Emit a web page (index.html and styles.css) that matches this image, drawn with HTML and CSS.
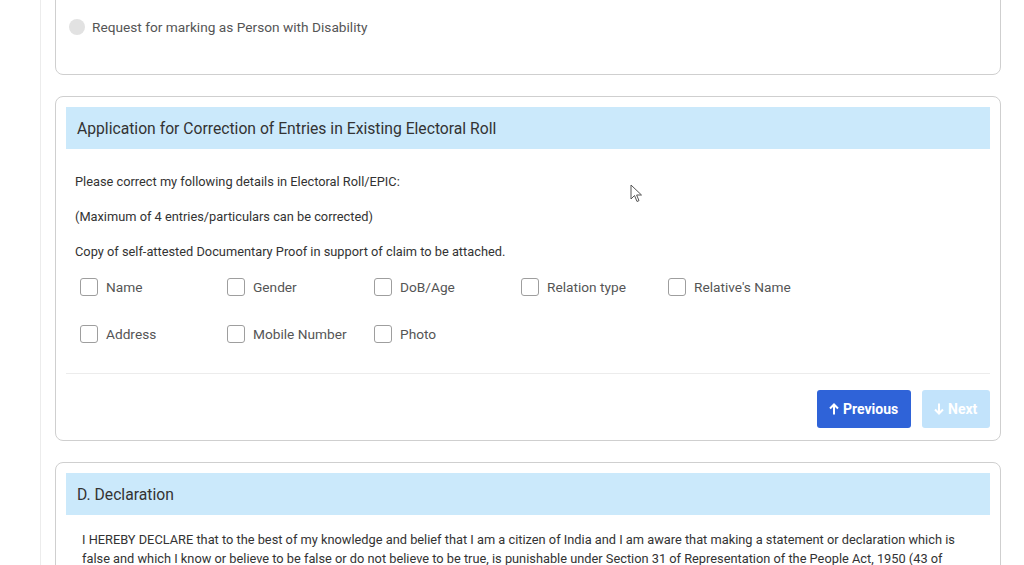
FILE: index.html
```html
<!DOCTYPE html>
<html lang="en">
<head>
    <meta charset="UTF-8">
    <meta name="viewport" content="width=device-width, initial-scale=1.0">
    <title>Form 8 - Correction of Entries</title>
    <link rel="stylesheet" href="styles.css">
</head>
<body>
    <div class="page">
        <div class="card card-top">
            <label class="radio-row">
                <span class="radio"></span>
                Request for marking as Person with Disability
            </label>
        </div>

        <div class="card">
            <div class="card-header">Application for Correction of Entries in Existing Electoral Roll</div>
            <div class="card-body">
                <p>Please correct my following details in Electoral Roll/EPIC:</p>
                <p>(Maximum of 4 entries/particulars can be corrected)</p>
                <p>Copy of self-attested Documentary Proof in support of claim to be attached.</p>

                <div class="check-grid">
                    <label class="check"><span class="box"></span>Name</label>
                    <label class="check"><span class="box"></span>Gender</label>
                    <label class="check"><span class="box"></span>DoB/Age</label>
                    <label class="check"><span class="box"></span>Relation type</label>
                    <label class="check"><span class="box"></span>Relative's Name</label>
                    <label class="check"><span class="box"></span>Address</label>
                    <label class="check"><span class="box"></span>Mobile Number</label>
                    <label class="check"><span class="box"></span>Photo</label>
                </div>
            </div>
            <div class="card-footer">
                <button class="btn btn-primary">
                    <svg class="arrow" width="10" height="12" viewBox="0 0 10 12"><path d="M5 11.5V1.5M1 5.5L5 1.5L9 5.5" fill="none" stroke="currentColor" stroke-width="2"/></svg>
                    Previous
                </button>
                <button class="btn btn-disabled">
                    <svg class="arrow" width="10" height="12" viewBox="0 0 10 12"><path d="M5 0.5V10.5M1 6.5L5 10.5L9 6.5" fill="none" stroke="currentColor" stroke-width="2"/></svg>
                    Next
                </button>
            </div>
        </div>

        <div class="card">
            <div class="card-header">D. Declaration</div>
            <div class="declaration">
                I HEREBY DECLARE that to the best of my knowledge and belief that I am a citizen of India and I am aware that making a statement or declaration which is false and which I know or believe to be false or do not believe to be true, is punishable under Section 31 of Representation of the People Act, 1950 (43 of 1950) with imprisonment for a term which may extend to one year or with fine or with both.
            </div>
        </div>
    </div>

    <svg class="cursor" width="14" height="20" viewBox="0 0 14 20">
        <path d="M1 1 L1 15 L4.5 11.5 L7 17.5 L9 16.6 L6.6 11 L11.5 11 Z" fill="#fff" stroke="#555" stroke-width="1" stroke-linejoin="round"/>
    </svg>
</body>
</html>
```

FILE: styles.css
```css
body {
    font-family: Roboto, "Liberation Sans", Arial, sans-serif;
    margin: 0;
    padding: 0;
    background-color: #fff;
    color: #444;
    overflow: hidden;
}
.page {
    margin-left: 40px;
    margin-right: 23px;
    padding-left: 14px;
    border-left: 1px solid #ececec;
    min-height: 600px;
    margin-top: -40px;
}
.card {
    border: 1px solid #cfcfcf;
    border-radius: 8px;
    padding: 10px;
    margin-bottom: 21px;
    background-color: #fff;
}
.card-top {
    padding: 58px 13px 39px;
}
.radio-row {
    display: flex;
    align-items: center;
    font-size: 13.7px;
    color: #555;
}
.radio {
    width: 16px;
    height: 16px;
    border-radius: 50%;
    background-color: #e2e2e2;
    margin-right: 7px;
}
.card-header {
    background-color: #cbe9fb;
    color: #333;
    font-size: 15.7px;
    height: 42px;
    display: flex;
    align-items: center;
    padding-left: 11px;
}
.card-body {
    padding: 24px 10px 0 9px;
    border-bottom: 1px solid #ececec;
}
.card-body p {
    font-size: 12.8px;
    line-height: 18px;
    margin: 0 0 17px;
    color: #333;
}
.check-grid {
    display: grid;
    grid-template-columns: repeat(5, 147px);
    row-gap: 27px;
    padding: 0 0 29px 5px;
    margin-top: -1px;
}
.check {
    display: flex;
    align-items: center;
    height: 20px;
    font-size: 13.7px;
    color: #555;
}
.box {
    width: 16px;
    height: 16px;
    border: 1px solid #9e9e9e;
    border-radius: 3px;
    margin-right: 8px;
}
.card-footer {
    display: flex;
    justify-content: flex-end;
    gap: 11px;
    padding-top: 16px;
    padding-bottom: 2px;
}
.btn {
    display: flex;
    align-items: center;
    gap: 4px;
    border: none;
    border-radius: 3px;
    height: 38px;
    font-family: inherit;
    font-size: 14px;
    font-weight: bold;
    color: #fff;
    padding: 0 12px;
}
.btn-primary {
    background-color: #2f63d8;
    width: 94px;
}
.btn-disabled {
    background-color: #c2e3fb;
    width: 68px;
}
.declaration {
    font-size: 12.8px;
    line-height: 19px;
    color: #333;
    padding: 15px 16px 0;
}
.cursor {
    position: absolute;
    left: 630px;
    top: 184px;
}
```
